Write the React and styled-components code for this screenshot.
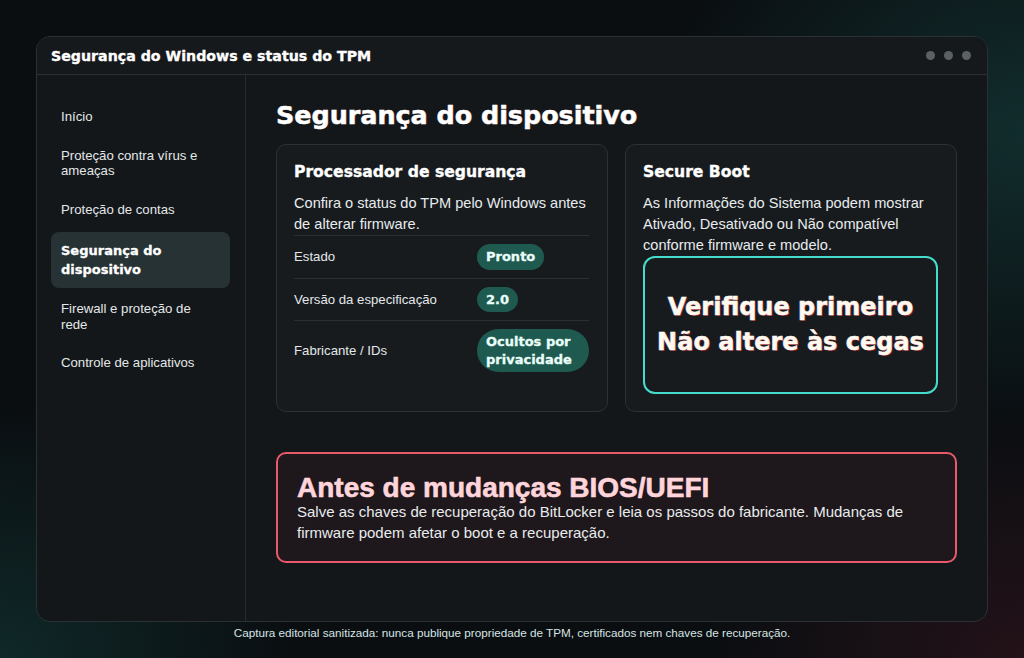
import styled, { createGlobalStyle } from "styled-components";

const GlobalStyle = createGlobalStyle`
  * { box-sizing: border-box; }
  html, body { margin: 0; padding: 0; }
  body {
    width: 1024px;
    height: 658px;
    overflow: hidden;
    font-family: "Liberation Sans", Arial, sans-serif;
    color: #eef1f2;
    background:
      radial-gradient(ellipse 520px 420px at 100% 20%, rgba(24, 70, 68, 0.55), transparent 70%),
      radial-gradient(ellipse 420px 360px at 0% 100%, rgba(20, 62, 60, 0.55), transparent 70%),
      radial-gradient(ellipse 460px 360px at 100% 100%, rgba(60, 22, 32, 0.5), transparent 70%),
      #0a0e11;
  }
`;

const heading = `"DejaVu Sans", Verdana, sans-serif`;

const Page = styled.div`
  padding: 36px 36px 0;
  display: flex;
  flex-direction: column;
  align-items: center;
`;

const Window = styled.div`
  width: 952px;
  height: 586px;
  border: 1px solid #2a3033;
  border-radius: 14px;
  background: #131719;
  overflow: hidden;
  display: flex;
  flex-direction: column;
`;

const TitleBar = styled.div`
  height: 38px;
  flex: none;
  display: flex;
  align-items: center;
  justify-content: space-between;
  padding: 0 16px 0 14px;
  background: #16191b;
  border-bottom: 1px solid #2a3033;

  h1 {
    margin: 0;
    font-family: ${heading};
    font-weight: 700;
    font-size: 14.2px;
    color: #ffffff;
    -webkit-text-stroke: 0.35px #ffffff;
  }
`;

const Dots = styled.div`
  display: flex;
  gap: 9px;

  i {
    width: 9px;
    height: 9px;
    border-radius: 50%;
    background: #5a6165;
  }
`;

const Body = styled.div`
  flex: 1;
  display: flex;
  min-height: 0;
`;

const Sidebar = styled.nav`
  width: 209px;
  flex: none;
  border-right: 1px solid #262c2f;
  padding: 24px 15px 24px 14px;
  display: flex;
  flex-direction: column;
  gap: 3px;
`;

const NavItem = styled.div`
  padding: ${(p) => (p.$active ? "9px 14px 9px 10px" : "10px 16px 10px 10px")};
  border-radius: 8px;
  font-family: ${(p) => (p.$active ? heading : `"Liberation Sans", Arial, sans-serif`)};
  font-weight: ${(p) => (p.$active ? 700 : 400)};
  font-size: ${(p) => (p.$active ? "13px" : "13.2px")};
  line-height: ${(p) => (p.$active ? "19px" : "15.5px")};
  color: ${(p) => (p.$active ? "#ffffff" : "#e4e8ea")};
  background: ${(p) => (p.$active ? "#273234" : "transparent")};
  margin-top: ${(p) => (p.$active ? "2px" : "0")};
  -webkit-text-stroke: ${(p) => (p.$active ? "0.3px #ffffff" : "0")};
`;

const Main = styled.main`
  flex: 1;
  padding: 24px 30px 0 30px;
  display: flex;
  flex-direction: column;
`;

const PageTitle = styled.h2`
  margin: 0 0 13px;
  font-family: ${heading};
  font-weight: 700;
  font-size: 25.4px;
  line-height: 32px;
  color: #ffffff;
  -webkit-text-stroke: 0.5px #ffffff;
  text-shadow: 1px 0 0 rgba(255, 80, 80, 0.25);
`;

const Cards = styled.div`
  display: grid;
  grid-template-columns: 1fr 1fr;
  gap: 17px;
  height: 268px;
`;

const Card = styled.section`
  border: 1px solid #2b3134;
  border-radius: 10px;
  background: #171b1e;
  padding: 17px 18px 17px 17px;
  display: flex;
  flex-direction: column;
`;

const CardTitle = styled.h3`
  margin: 0 0 11px;
  font-family: ${heading};
  font-weight: 700;
  font-size: 15.6px;
  line-height: 20px;
  color: #ffffff;
  -webkit-text-stroke: 0.35px #ffffff;
`;

const CardText = styled.p`
  margin: 0;
  font-size: 14.6px;
  line-height: 21px;
  color: #e8ecee;
`;

const Rows = styled.div`
  display: flex;
  flex-direction: column;
`;

const Row = styled.div`
  display: grid;
  grid-template-columns: 183px 1fr;
  align-items: center;
  padding: 8px 0;
  border-top: 1px solid #293033;
  font-size: 13.2px;
  color: #e4e8ea;
`;

const Badge = styled.span`
  justify-self: start;
  padding: 4px 9px;
  border-radius: 999px;
  background: #1f5a50;
  font-family: ${heading};
  font-weight: 700;
  font-size: 13px;
  line-height: 17.5px;
  color: #eafff9;
  -webkit-text-stroke: 0.3px #eafff9;
`;

const Callout = styled.div`
  flex: 1;
  margin-top: 0;
  border: 2px solid #45dccb;
  border-radius: 12px;
  display: flex;
  align-items: center;
  justify-content: center;
  text-align: center;
  font-family: ${heading};
  font-weight: 700;
  font-size: 24px;
  line-height: 35px;
  color: #fff8ee;
  -webkit-text-stroke: 0.5px #fff8ee;
  text-shadow: 1px 1px 0 rgba(190, 30, 40, 0.7), -1px 0 0 rgba(40, 60, 160, 0.4);
`;

const Alert = styled.section`
  margin-top: 40px;
  border: 2px solid #e8596b;
  border-radius: 10px;
  background: #1e171b;
  padding: 19.5px 19px 18.5px 19px;

  h4 {
    margin: 0;
    font-family: "Liberation Sans", Arial, sans-serif;
    font-weight: 700;
    font-size: 28px;
    line-height: 27px;
    color: #ffd4da;
    -webkit-text-stroke: 0.6px #ffd4da;
  }

  p {
    margin: 0;
    font-size: 15px;
    line-height: 21px;
    color: #e8ecee;
  }
`;

const Footer = styled.p`
  margin: 4px 0 0;
  font-size: 11.7px;
  line-height: 14px;
  color: #d6e4e4;
`;

const nav = [
  "Início",
  "Proteção contra vírus e ameaças",
  "Proteção de contas",
  "Segurança do dispositivo",
  "Firewall e proteção de rede",
  "Controle de aplicativos",
];

const tpm = [
  { label: "Estado", value: "Pronto" },
  { label: "Versão da especificação", value: "2.0" },
  { label: "Fabricante / IDs", value: "Ocultos por privacidade" },
];

export default function App() {
  return (
    <>
      <GlobalStyle />
      <Page>
        <Window>
          <TitleBar>
            <h1>Segurança do Windows e status do TPM</h1>
            <Dots>
              <i />
              <i />
              <i />
            </Dots>
          </TitleBar>
          <Body>
            <Sidebar>
              {nav.map((item) => (
                <NavItem key={item} $active={item === "Segurança do dispositivo"}>
                  {item}
                </NavItem>
              ))}
            </Sidebar>
            <Main>
              <PageTitle>Segurança do dispositivo</PageTitle>
              <Cards>
                <Card>
                  <CardTitle>Processador de segurança</CardTitle>
                  <CardText>
                    Confira o status do TPM pelo Windows antes de alterar firmware.
                  </CardText>
                  <Rows>
                    {tpm.map((r) => (
                      <Row key={r.label}>
                        <span>{r.label}</span>
                        <Badge>{r.value}</Badge>
                      </Row>
                    ))}
                  </Rows>
                </Card>
                <Card>
                  <CardTitle>Secure Boot</CardTitle>
                  <CardText>
                    As Informações do Sistema podem mostrar Ativado, Desativado ou Não
                    compatível conforme firmware e modelo.
                  </CardText>
                  <Callout>
                    Verifique primeiro
                    <br />
                    Não altere às cegas
                  </Callout>
                </Card>
              </Cards>
              <Alert>
                <h4>Antes de mudanças BIOS/UEFI</h4>
                <p>
                  Salve as chaves de recuperação do BitLocker e leia os passos do
                  fabricante. Mudanças de firmware podem afetar o boot e a recuperação.
                </p>
              </Alert>
            </Main>
          </Body>
        </Window>
        <Footer>
          Captura editorial sanitizada: nunca publique propriedade de TPM, certificados
          nem chaves de recuperação.
        </Footer>
      </Page>
    </>
  );
}
